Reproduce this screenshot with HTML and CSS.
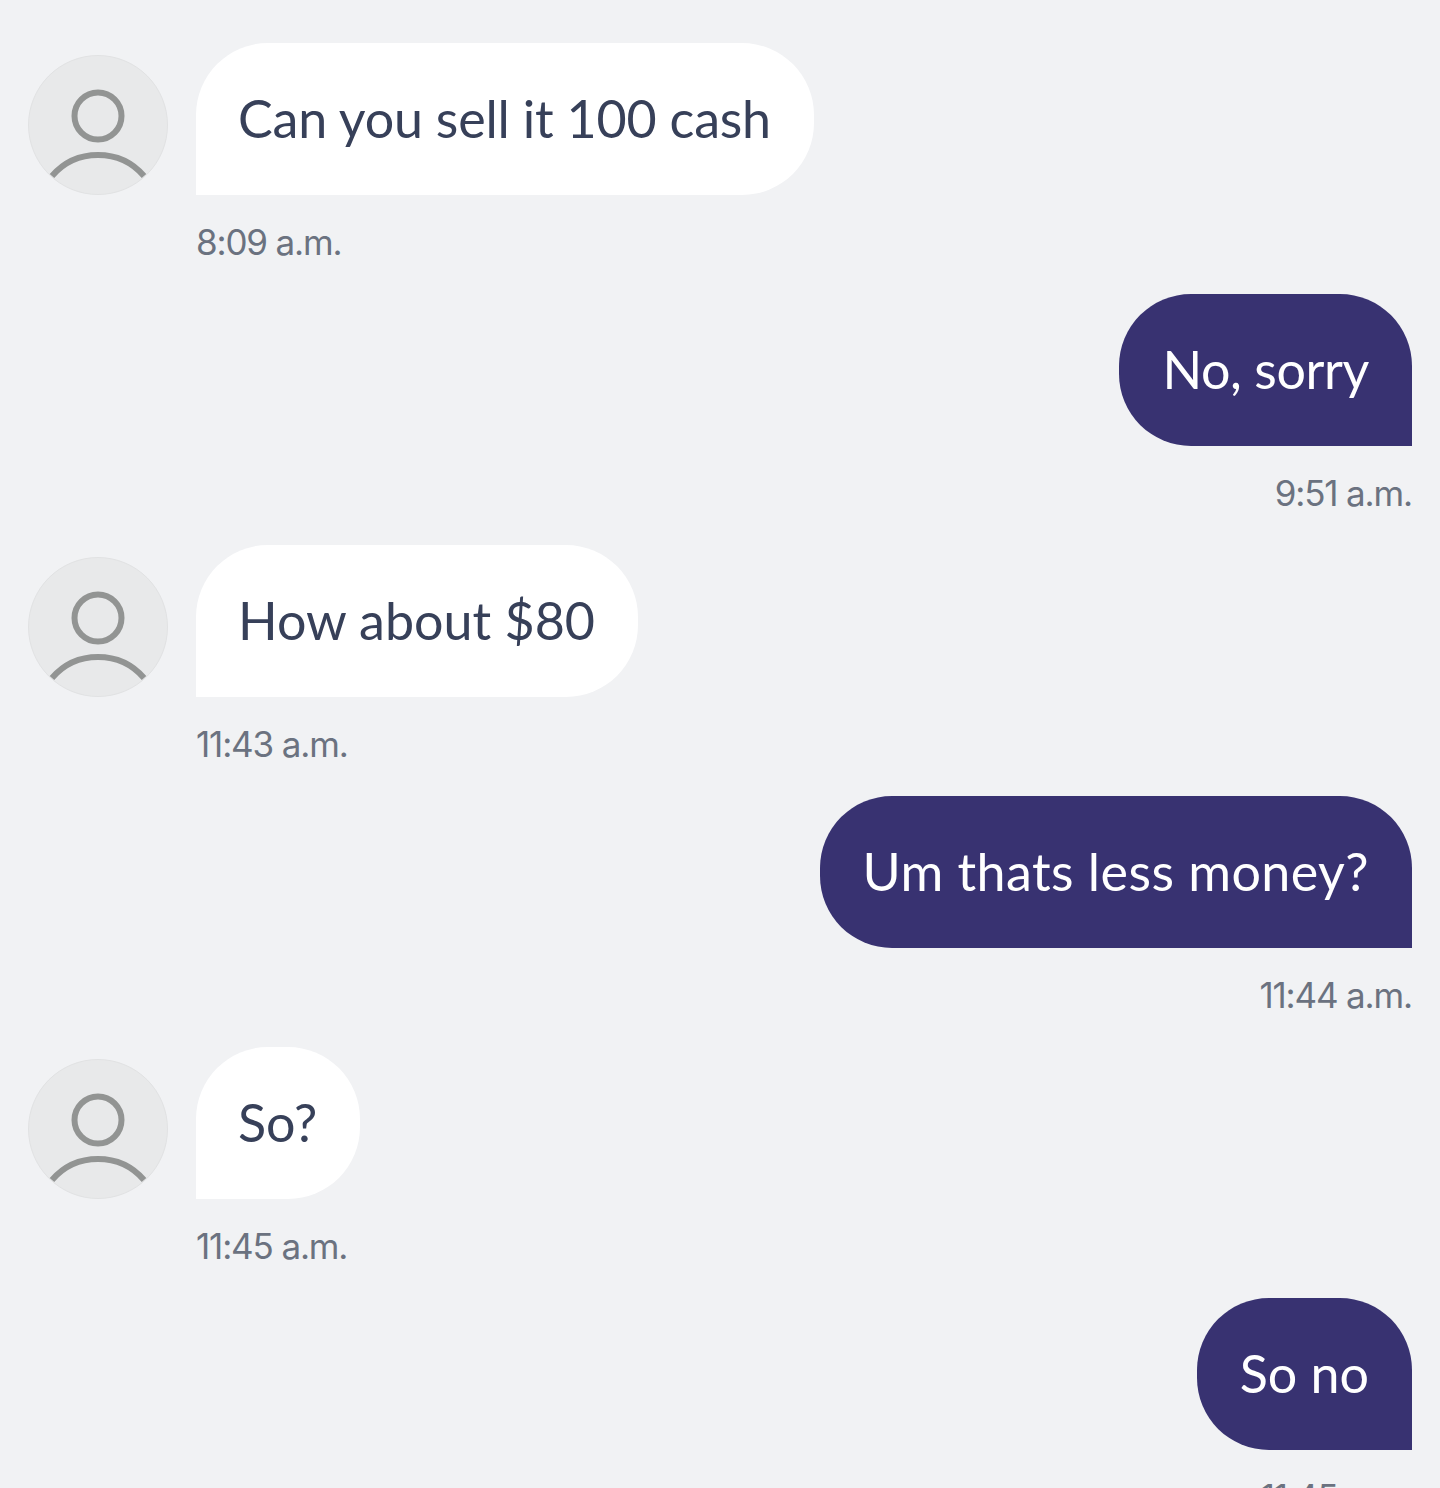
FILE: index.html
```
<!DOCTYPE html>
<html lang="en">
<head>
<meta charset="utf-8">
<title>Messages</title>
<link rel="stylesheet" href="styles.css">
</head>
<body>
<main class="thread">
  <div class="msg in">
    <div class="line">
      <svg class="avatar" viewBox="0 0 140 140"><circle cx="70" cy="70" r="69.5" fill="#e8e9ea" stroke="#e1e2e3"/><circle cx="70" cy="61" r="23.5" fill="none" stroke="#929493" stroke-width="6"/><path d="M24 121C36 107 52 100 70 100S104 107 116 121" fill="none" stroke="#929493" stroke-width="6"/></svg>
      <div class="bubble tight">Can you sell it 100 cash</div>
    </div>
    <div class="time">8:09 a.m.</div>
  </div>
  <div class="msg out">
    <div class="line"><div class="bubble tighter">No, sorry</div></div>
    <div class="time">9:51 a.m.</div>
  </div>
  <div class="msg in">
    <div class="line">
      <svg class="avatar" viewBox="0 0 140 140"><circle cx="70" cy="70" r="69.5" fill="#e8e9ea" stroke="#e1e2e3"/><circle cx="70" cy="61" r="23.5" fill="none" stroke="#929493" stroke-width="6"/><path d="M24 121C36 107 52 100 70 100S104 107 116 121" fill="none" stroke="#929493" stroke-width="6"/></svg>
      <div class="bubble">How about $80</div>
    </div>
    <div class="time">11:43 a.m.</div>
  </div>
  <div class="msg out">
    <div class="line"><div class="bubble wide">Um thats less money?</div></div>
    <div class="time">11:44 a.m.</div>
  </div>
  <div class="msg in">
    <div class="line">
      <svg class="avatar" viewBox="0 0 140 140"><circle cx="70" cy="70" r="69.5" fill="#e8e9ea" stroke="#e1e2e3"/><circle cx="70" cy="61" r="23.5" fill="none" stroke="#929493" stroke-width="6"/><path d="M24 121C36 107 52 100 70 100S104 107 116 121" fill="none" stroke="#929493" stroke-width="6"/></svg>
      <div class="bubble">So?</div>
    </div>
    <div class="time">11:45 a.m.</div>
  </div>
  <div class="msg out">
    <div class="line"><div class="bubble">So no</div></div>
    <div class="time">11:45 a.m.</div>
  </div>
</main>
</body>
</html>
```
FILE: styles.css
```
html, body {
  margin: 0;
  height: 1488px;
  overflow: hidden;
  background: #f1f2f4;
}
.thread {
  display: flex;
  flex-direction: column;
  gap: 30px;
  padding: 43px 28px 0;
}
.msg {
  display: flex;
  flex-direction: column;
  gap: 26px;
}
.line {
  display: flex;
  align-items: flex-end;
  gap: 28px;
}
.avatar {
  width: 140px;
  height: 140px;
  flex: none;
}
.bubble {
  font-family: Lato, sans-serif;
  font-size: 52px;
  line-height: 151px;
  height: 152px;
  padding: 0 43px;
  box-sizing: border-box;
  border-radius: 72px;
  white-space: nowrap;
}
.tight {
  letter-spacing: -0.2px;
}
.tighter {
  letter-spacing: -0.4px;
}
.wide {
  letter-spacing: 0.45px;
}
.in .bubble {
  padding-left: 42px;
  background: #fff;
  color: #374059;
  border-bottom-left-radius: 0;
}
.out .line {
  justify-content: flex-end;
}
.out .bubble {
  background: #383271;
  color: #fff;
  border-bottom-right-radius: 0;
}
.time {
  font-family: Inter, sans-serif;
  font-size: 35px;
  letter-spacing: -1.15px;
  line-height: 43px;
  color: #6b7280;
}
.in .time {
  margin-left: 168px;
}
.out .time {
  text-align: right;
}
```
